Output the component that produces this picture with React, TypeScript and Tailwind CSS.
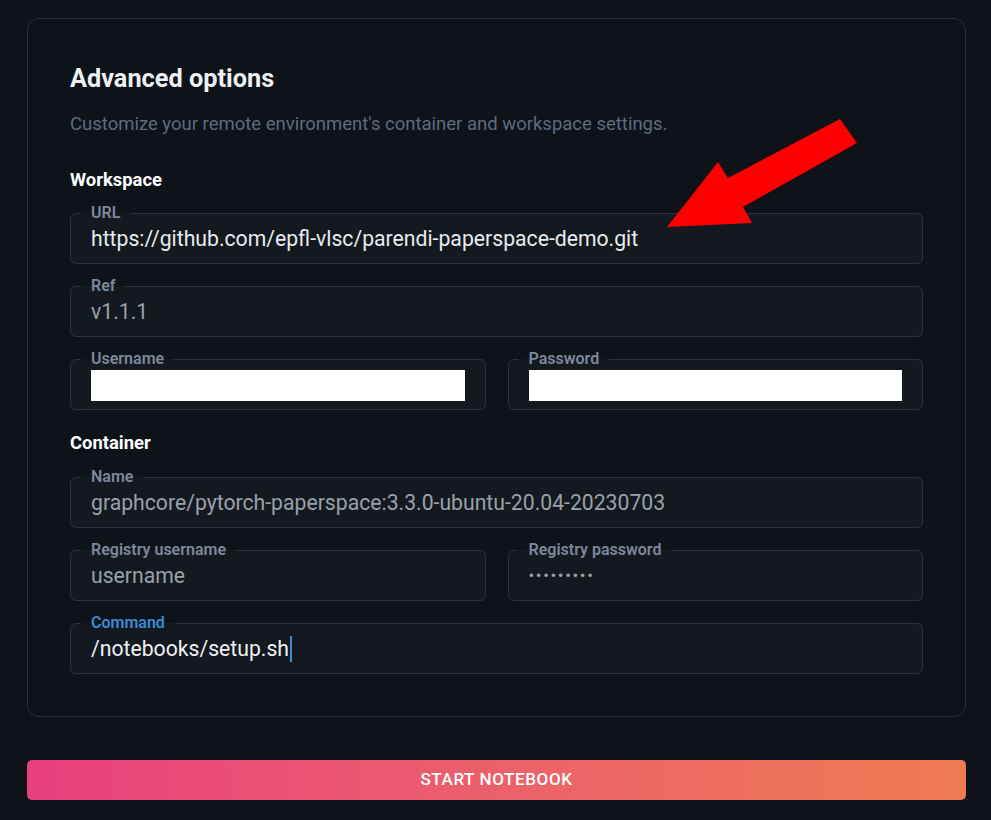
import React from "react";

const font = { fontFamily: "Roboto, 'Noto Sans', sans-serif" };

function Field({
  label,
  children,
  focused = false,
  className = "",
}: {
  label: string;
  children: React.ReactNode;
  focused?: boolean;
  className?: string;
}) {
  return (
    <fieldset
      className={
        "m-0 min-w-0 rounded-[6px] border border-[#2c323c] bg-[#141920] pl-[9px] pr-[20px] pt-0 pb-[6px] " +
        className
      }
    >
      <legend
        className={
          "pl-[11px] pr-[10px] text-[16px] leading-[16px] font-semibold " +
          (focused ? "text-[#3a8ad8]" : "text-[#7d889a]")
        }
      >
        {label}
      </legend>
      <div className="flex h-[36px] items-center pl-[11px]">{children}</div>
    </fieldset>
  );
}

export default function App() {
  return (
    <div
      className="relative min-h-screen w-full bg-[#0e1219] pl-[27px] pr-[25px] pt-[18px] pb-[20px]"
      style={font}
    >
      <div className="rounded-[12px] border border-[#2a3039] px-[42px] pt-[42px] pb-[42px]">
        <h2 className="text-[25.3px] leading-[36px] font-bold text-[#eef0f3]">
          Advanced options
        </h2>
        <p className="mt-[15px] text-[18.5px] leading-[24px] text-[#5f6b7d]">
          Customize your remote environment's container and workspace settings.
        </p>

        <h3 className="mt-[32px] text-[18.4px] leading-[24px] font-bold text-white">
          Workspace
        </h3>
        <div className="mt-[13px] flex flex-col gap-[14px]">
          <Field label="URL">
            <span className="text-[21.2px] text-[#e8ebef]">
              https://github.com/epfl-vlsc/parendi-paperspace-demo.git
            </span>
          </Field>
          <Field label="Ref">
            <span className="text-[21.2px] text-[#9aa1aa]">v1.1.1</span>
          </Field>
          <div className="grid grid-cols-2 gap-[22px]">
            <Field label="Username">
              <div className="h-[31px] w-full bg-white" />
            </Field>
            <Field label="Password">
              <div className="h-[31px] w-full bg-white" />
            </Field>
          </div>
        </div>

        <h3 className="mt-[21px] text-[18.4px] leading-[24px] font-bold text-white">
          Container
        </h3>
        <div className="mt-[14px] flex flex-col gap-[14px]">
          <Field label="Name">
            <span className="text-[21.2px] text-[#9aa1aa]">
              graphcore/pytorch-paperspace:3.3.0-ubuntu-20.04-20230703
            </span>
          </Field>
          <div className="grid grid-cols-2 gap-[22px]">
            <Field label="Registry username">
              <span className="text-[21.2px] text-[#9aa1aa]">username</span>
            </Field>
            <Field label="Registry password">
              <span className="text-[17px] tracking-[1.6px] text-[#9aa1aa]">
                •••••••••
              </span>
            </Field>
          </div>
          <Field label="Command" focused>
            <span className="text-[21.2px] text-[#eef0f3]">
              /notebooks/setup.sh
            </span>
            <span className="ml-[1px] inline-block h-[26px] w-[2px] bg-[#3a8ad8]" />
          </Field>
        </div>
      </div>

      <button className="mt-[43px] flex h-[40px] w-full items-center justify-center rounded-[5px] bg-gradient-to-r from-[#e83e7e] to-[#ef7b51] text-[17px] font-medium tracking-[0.6px] text-white">
        START NOTEBOOK
      </button>

      <svg
        className="pointer-events-none absolute left-0 top-0"
        width="991"
        height="820"
        viewBox="0 0 991 820"
      >
        <polygon
          points="840,119 857,143 743,207 752,223 667,227 718,162 728,178"
          fill="#ff0000"
        />
      </svg>
    </div>
  );
}
